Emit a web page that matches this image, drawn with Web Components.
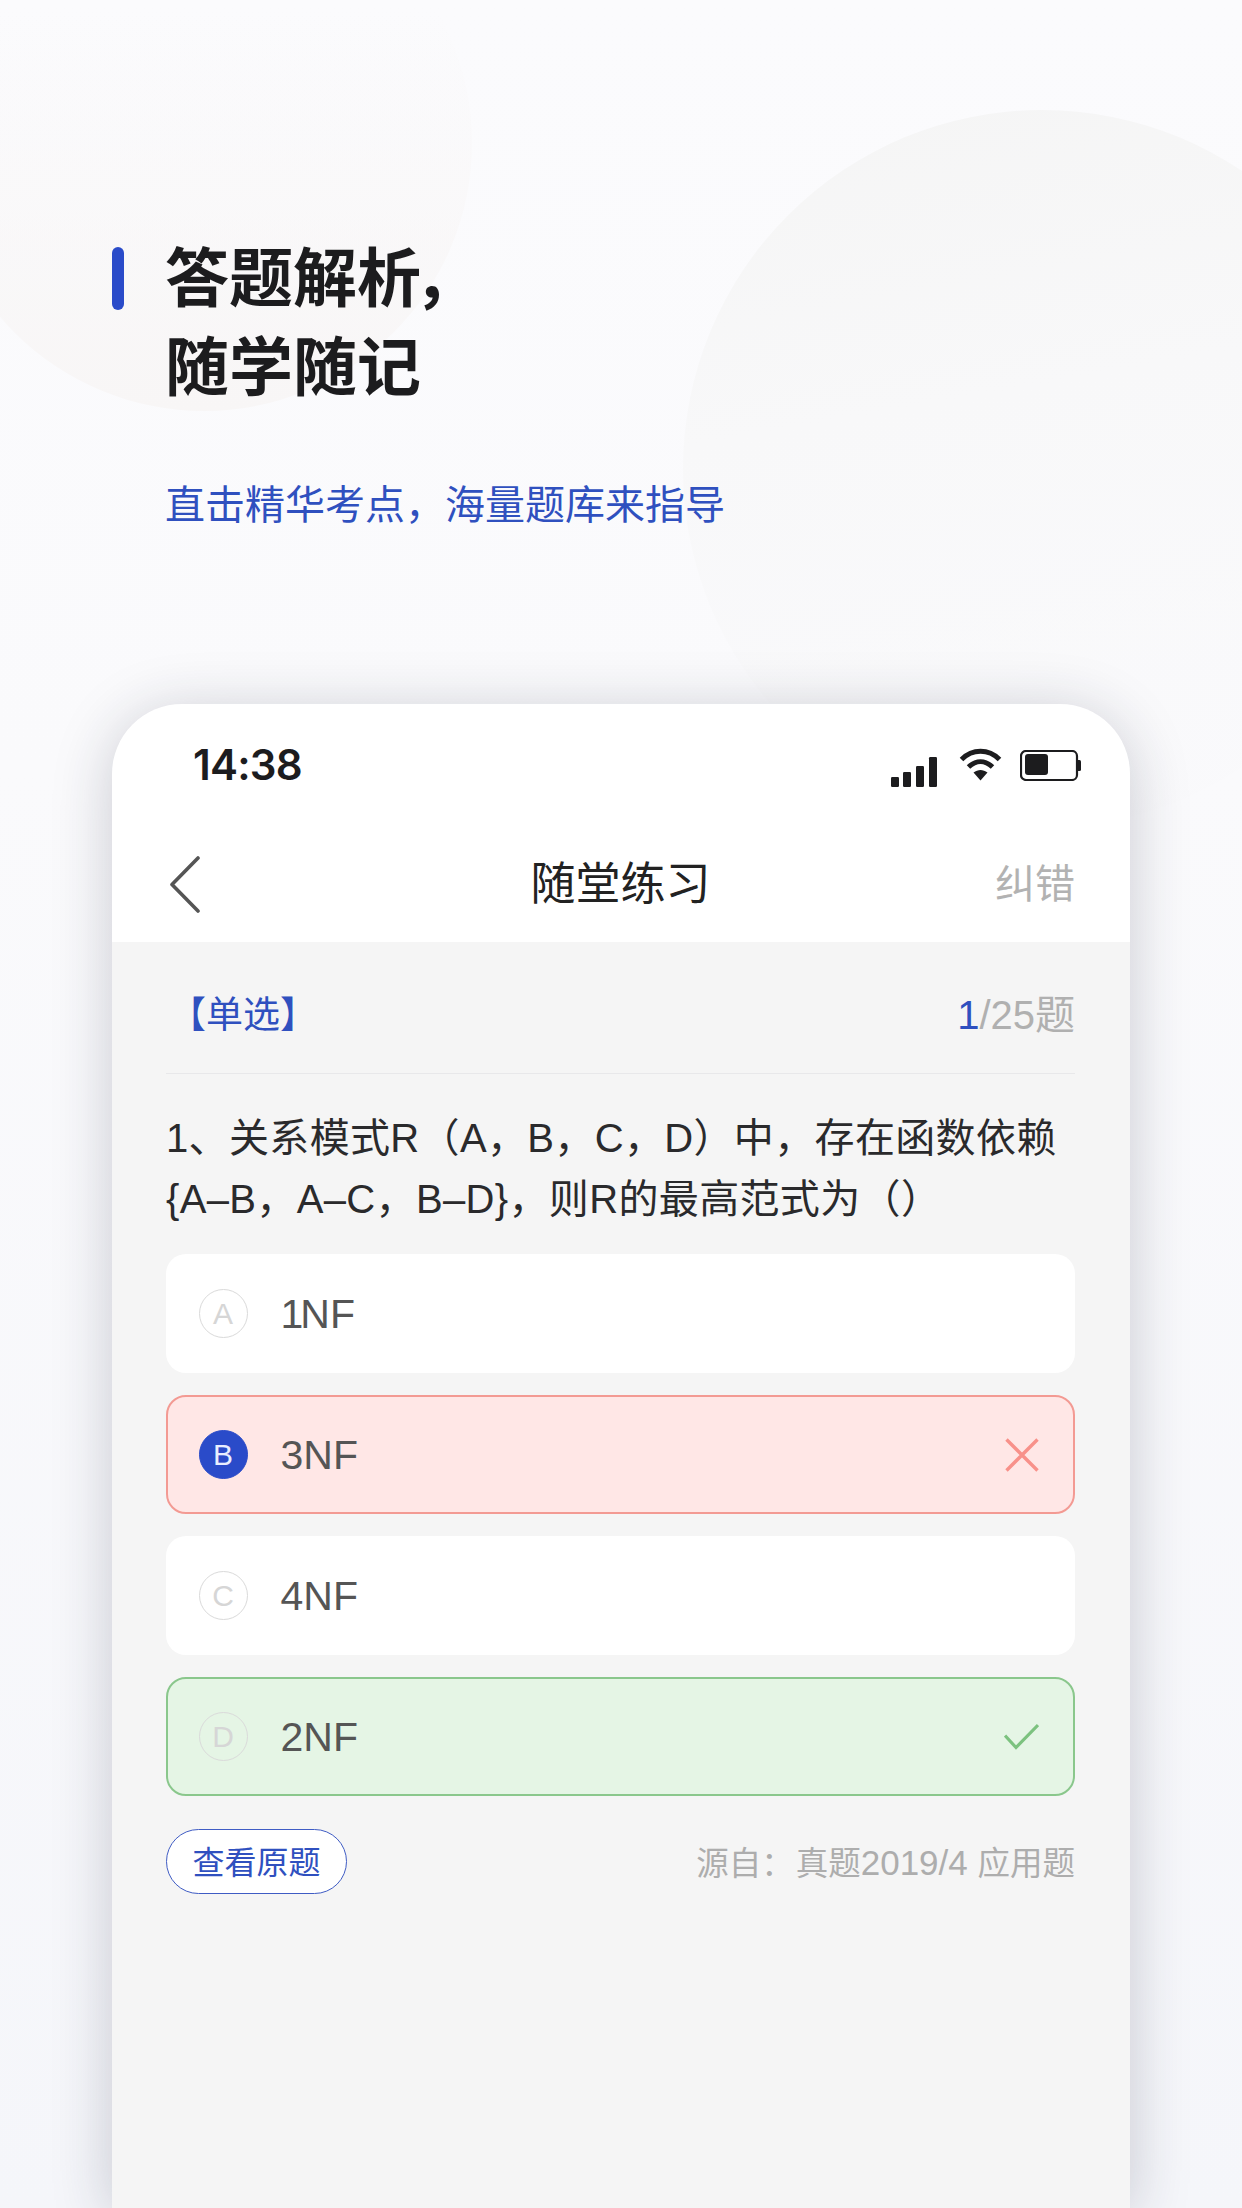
<!DOCTYPE html>
<html lang="zh-CN">
<head>
<meta charset="utf-8">
<title>答题解析</title>
<style>
html,body{margin:0;padding:0;height:2208px;overflow:hidden}
body{font-family:"Liberation Sans","Noto Sans CJK SC",sans-serif}
</style>
</head>
<body>
<promo-page>
  <promo-head slot="head" subtitle="直击精华考点，海量题库来指导">
    <span>答题解<span style="letter-spacing:-7px">析</span>，</span><span>随学随记</span>
  </promo-head>
  <phone-frame slot="phone">
    <status-bar time="14:38"></status-bar>
    <nav-bar title-text="随堂练习" action="纠错"></nav-bar>
    <quiz-panel>
      <quiz-meta kind="【单选】" current="1" rest="/25题"></quiz-meta>
      <quiz-question>1、关系模式R（A，B，C，D）中，存在函数依赖<br>{A–B，A–C，B–D}，则R的最高范式为（）</quiz-question>
      <quiz-option letter="A" text="1NF" tight></quiz-option>
      <quiz-option letter="B" text="3NF" state="wrong"></quiz-option>
      <quiz-option letter="C" text="4NF"></quiz-option>
      <quiz-option letter="D" text="2NF" state="right"></quiz-option>
      <quiz-foot label="查看原题">源自：<span style="margin-left:2px">真题</span><span style="font-size:35px">2019/4 </span>应用题</quiz-foot>
    </quiz-panel>
  </phone-frame>
</promo-page>
<script>
const FONT='"Liberation Sans","Noto Sans CJK SC",sans-serif';
function def(name,html,init){
  customElements.define(name,class extends HTMLElement{
    connectedCallback(){
      if(this.shadowRoot)return;
      const r=this.attachShadow({mode:'open'});
      r.innerHTML=html;
      if(init)init(r,this);
    }
  });
}
def('promo-page',`<style>
:host{display:block;position:relative;width:1242px;height:2208px;overflow:hidden;
background:linear-gradient(180deg,#fbfbfd 0%,#fafafc 35%,#f5f6fa 100%);font-family:${FONT}}
.c1,.c2{position:absolute;border-radius:50%}
.c1{left:-64px;top:-125px;width:536px;height:536px;background:linear-gradient(180deg,rgba(248,247,247,0) 25%,#f8f6f6 100%)}
.c2{left:683px;top:110px;width:718px;height:718px;background:linear-gradient(170deg,#f5f5f5 0%,#f8f8f9 40%,rgba(249,249,251,.6) 85%)}
.flow{position:relative;display:flex;flex-direction:column;height:100%}
</style>
<div class="c1"></div><div class="c2"></div>
<div class="flow"><slot name="head"></slot><slot name="phone"></slot></div>`);
def('promo-head',`<style>
:host{display:grid;grid-template-columns:12px 1fr;column-gap:41px;padding:235px 0 0 112px;height:704px;box-sizing:border-box;align-content:start;flex:none}
.bar{width:12px;height:63px;margin-top:12px;border-radius:6px;background:#2a4bc9}
.title{font-size:64px;line-height:89px;font-weight:700;color:#1c1c1e;display:flex;flex-direction:column}
.sub{grid-column:2;margin-top:64px;font-size:40px;line-height:56px;color:#2f50bf}
</style>
<div class="bar"></div><div class="title"><slot></slot></div><div class="sub"></div>`,(r,h)=>{r.querySelector('.sub').textContent=h.getAttribute('subtitle')});
def('phone-frame',`<style>
:host{display:flex;flex-direction:column;margin:0 112px;height:1504px;flex:none;border-radius:70px 70px 0 0;background:#fff;box-shadow:0 8px 60px rgba(30,35,60,.22);overflow:hidden}
</style><slot></slot>`);
def('status-bar',`<style>
:host{display:flex;align-items:center;height:122px;padding:0 49px 0 81px;flex:none}
.t{font:600 42px/50px Inter,${FONT};color:#1c1c1e;letter-spacing:-.8px;margin-right:auto;margin-top:-1px}
svg{display:block;flex:none}
.s{margin-top:14px}.w{margin-left:22px;margin-top:-2px}.b{margin-left:18px}
</style>
<span class="t"></span>
<svg class="s" width="46" height="30" viewBox="0 0 46 30" fill="#1c1c1e"><rect x="0" y="20" width="8" height="10" rx="1.2"/><rect x="12" y="15" width="8" height="15" rx="1.2"/><rect x="25" y="9" width="8" height="21" rx="1.2"/><rect x="38" y="0" width="8" height="30" rx="1.2"/></svg>
<svg class="w" width="43" height="33" viewBox="0 0 43 33" fill="none" stroke="#1c1c1e" stroke-width="5"><path d="M2.5 11.5C13.5 .6 29.5 .6 40.5 11.5"/><path d="M9.5 19C17 12 26 12 33.5 19"/><path d="M14.5 24.5 21.5 32.5 28.5 24.5C24 21 19 21 14.5 24.5Z" fill="#1c1c1e" stroke="none"/></svg>
<svg class="b" width="61" height="31" viewBox="0 0 61 31" fill="none"><rect x="1" y="1" width="56" height="29" rx="5" stroke="#1c1c1e" stroke-width="2.2"/><rect x="5" y="4" width="23" height="21" rx="3" fill="#1c1c1e"/><path d="M58 10h1.5a1.5 1.5 0 0 1 1.5 1.5v8a1.5 1.5 0 0 1-1.5 1.5H58z" fill="#1c1c1e"/></svg>`,(r,h)=>{r.querySelector('.t').textContent=h.getAttribute('time')});
def('nav-bar',`<style>
:host{display:grid;grid-template-columns:1fr auto 1fr;align-items:center;height:116px;padding:0 55px 0 58px;flex:none}
svg{display:block}
.m{font-size:45px;color:#222;line-height:60px;margin-left:-4px;padding-top:2px}
.a{font-size:40px;color:#b2b2b2;text-align:right;line-height:56px}
</style>
<svg width="30" height="57" viewBox="0 0 30 57" fill="none" stroke="#555" stroke-width="3.6" stroke-linecap="round" stroke-linejoin="round"><path d="M28 2 2 28.5 28 55"/></svg>
<span class="m"></span><span class="a"></span>`,(r,h)=>{r.querySelector('.m').textContent=h.getAttribute('title-text');r.querySelector('.a').textContent=h.getAttribute('action')});
def('quiz-panel',`<style>
:host{display:flex;flex-direction:column;flex:1;background:#f5f5f5;padding:0 55px 0 54px}
</style><slot></slot>`);
def('quiz-meta',`<style>
:host{display:flex;justify-content:space-between;align-items:center;height:123px;padding-top:8px;box-sizing:content-box;border-bottom:1px solid #e8e8ea;flex:none}
.k{font-size:37px;color:#2f50bf;margin-left:3px}
.n{font-size:40px;color:#b0b0b0}.n b{font-weight:400;color:#2f50bf}.n i{font-style:normal}
</style><span class="k"></span><span class="n"><b></b><i></i></span>`,(r,h)=>{r.querySelector('.k').textContent=h.getAttribute('kind');r.querySelector('b').textContent=h.getAttribute('current');r.querySelector('i').textContent=h.getAttribute('rest')});
def('quiz-question',`<style>
:host{display:block;font-size:40px;line-height:61px;letter-spacing:.35px;color:#2a2a2c;padding-top:34px;margin-bottom:24px;white-space:nowrap}
</style><slot></slot>`);
def('quiz-option',`<style>
:host{display:flex;align-items:center;height:119px;box-sizing:border-box;border-radius:20px;background:#fff;margin-bottom:22px;padding:0 34.5px 0 30.5px;border:2.5px solid transparent;flex:none}
:host([state=wrong]){background:#ffe7e6;border-color:#f39a93}
:host([state=right]){background:#e5f5e5;border-color:#8ac78c}
.c{width:49px;height:49px;border-radius:50%;border:1.8px solid #dadada;box-sizing:border-box;display:flex;align-items:center;justify-content:center;font-size:30px;color:#d6d6d6;flex:none}
:host([state=wrong]) .c{background:#2a4bc9;border-color:#2a4bc9;color:#e8eeff}
.x{margin-left:33px;padding-top:2px;font-size:41px;color:#555;flex:1}
:host([tight]) .x::first-letter{letter-spacing:-3px}
svg{display:none;flex:none}
:host([state=wrong]) .w,:host([state=right]) .r{display:block}
</style>
<span class="c"></span><span class="x"></span>
<svg class="w" width="34" height="34" viewBox="0 0 34 34" fill="none" stroke="#f8918a" stroke-width="3.4"><path d="M1.5 1.5 32.5 32.5M32.5 1.5 1.5 32.5"/></svg>
<svg class="r" width="35" height="27" viewBox="0 0 35 27" fill="none" stroke="#7cc27f" stroke-width="3.2"><path d="M1 12.5 12 24.5 34 2"/></svg>`,(r,h)=>{r.querySelector('.c').textContent=h.getAttribute('letter');r.querySelector('.x').textContent=h.getAttribute('text')});
def('quiz-foot',`<style>
:host{display:flex;justify-content:space-between;align-items:center;margin-top:11px;flex:none}
.b{display:flex;align-items:center;justify-content:center;width:181px;height:65px;box-sizing:border-box;border:1.8px solid #3f5cc4;border-radius:33px;background:#fff;color:#2f50bf;font-size:32px;padding-bottom:3px}
.s{font-size:32.5px;color:#adadad;margin-bottom:3px}
</style><span class="b"></span><span class="s"><slot></slot></span>`,(r,h)=>{r.querySelector('.b').textContent=h.getAttribute('label')});
</script>
</body>
</html>
